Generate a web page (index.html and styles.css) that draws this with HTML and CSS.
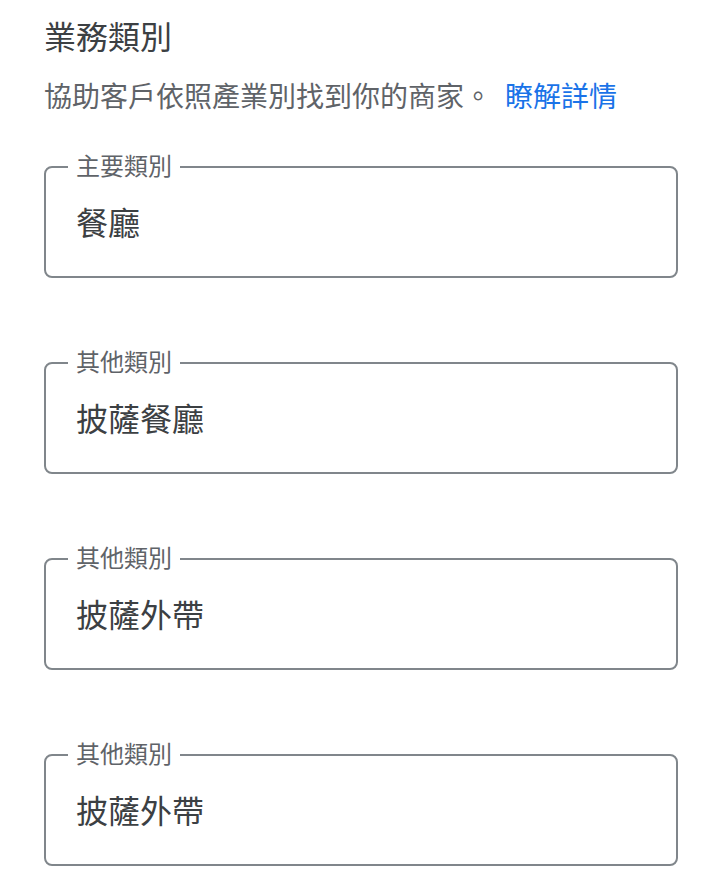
FILE: index.html
```html
<!DOCTYPE html>
<html lang="zh-Hant">
<head>
<meta charset="utf-8">
<title>業務類別</title>
<link rel="stylesheet" href="styles.css">
</head>
<body>
<main class="page">
  <h1 class="title">業務類別</h1>
  <p class="subtitle">協助客戶依照產業別找到你的商家。 <a class="link" href="#">瞭解詳情</a></p>
  <div class="fields">
    <fieldset class="field">
      <legend class="field-label">主要類別</legend>
      <div class="field-value">餐廳</div>
    </fieldset>
    <fieldset class="field">
      <legend class="field-label">其他類別</legend>
      <div class="field-value">披薩餐廳</div>
    </fieldset>
    <fieldset class="field">
      <legend class="field-label">其他類別</legend>
      <div class="field-value">披薩外帶</div>
    </fieldset>
    <fieldset class="field">
      <legend class="field-label">其他類別</legend>
      <div class="field-value">披薩外帶</div>
    </fieldset>
  </div>
</main>
</body>
</html>
```
FILE: styles.css
```css
html, body {
  margin: 0;
  padding: 0;
  background: #ffffff;
}
body {
  font-family: Roboto, "Noto Sans CJK TC", "Noto Sans", sans-serif;
  color: #3c4043;
}
.page {
  padding: 18px 0 0 44px;
  width: 634px;
}
.title {
  margin: 0;
  font-size: 32px;
  line-height: 40px;
  font-weight: 400;
  color: #3c4043;
}
.subtitle {
  margin: 20px 0 0;
  font-size: 28px;
  line-height: 40px;
  color: #5f6368;
}
.link {
  margin-left: 6px;
  color: #1a73e8;
  text-decoration: none;
}
.fields {
  display: flex;
  flex-direction: column;
  gap: 71px;
  margin-top: 35px;
}
.field {
  box-sizing: border-box;
  width: 634px;
  margin: 0;
  padding: 23px 22px 32px;
  border: 2px solid #80868b;
  border-radius: 8px;
  min-width: 0;
}
.field-label {
  padding: 0 8px;
  font-size: 24px;
  line-height: 28px;
  color: #5f6368;
}
.field-value {
  padding-left: 8px;
  font-size: 32px;
  line-height: 40px;
  color: #3c4043;
}
```
